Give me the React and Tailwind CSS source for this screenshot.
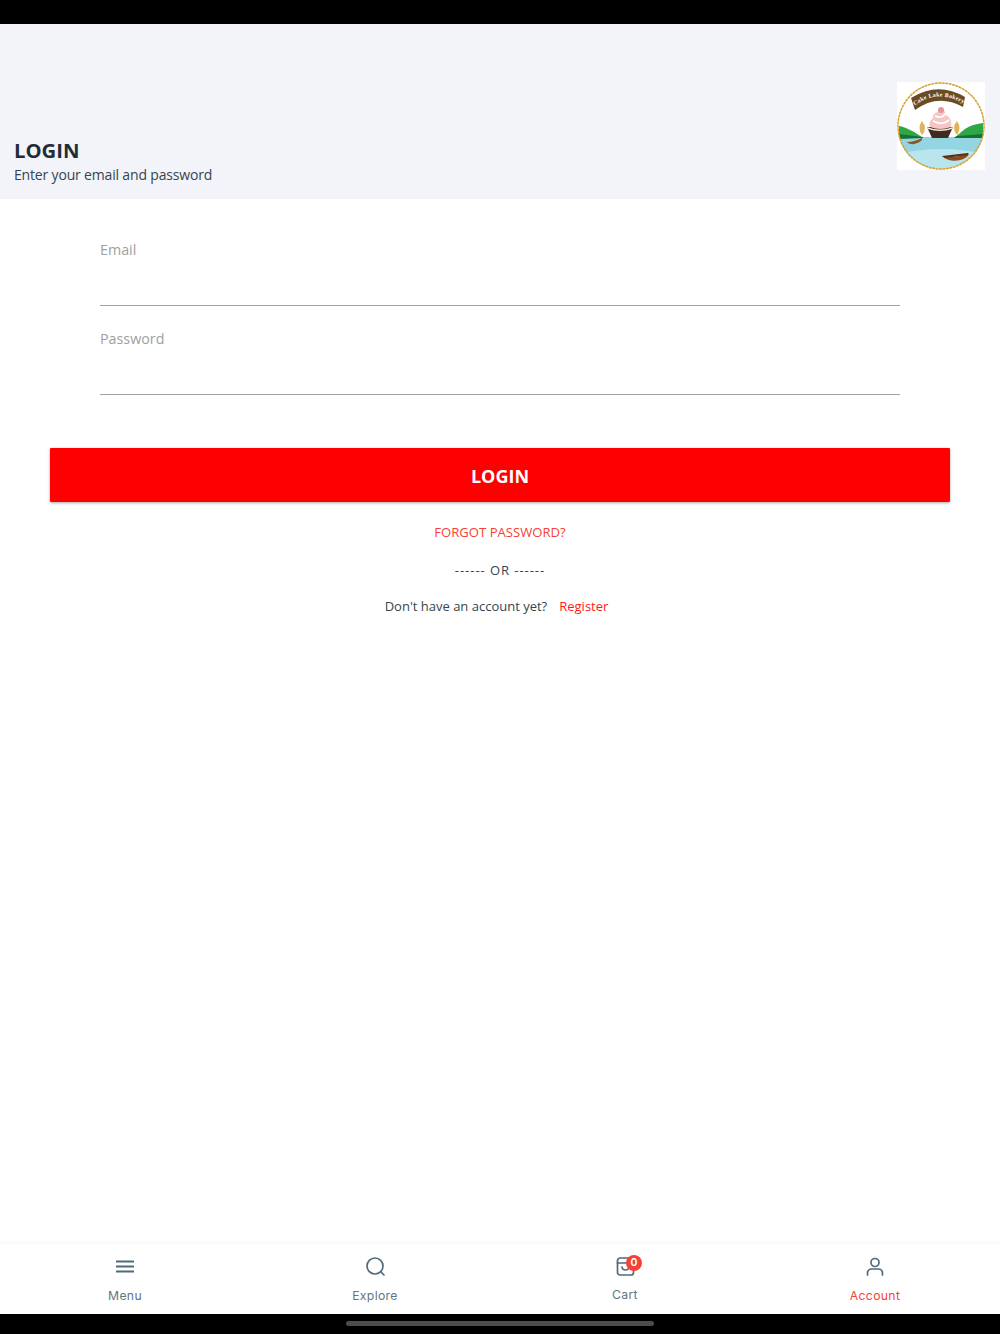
import React from "react";

function Logo() {
  return (
    <svg width="88" height="88" viewBox="0 0 88 88" className="block bg-white">
      <defs>
        <clipPath id="c"><circle cx="44" cy="44" r="43" /></clipPath>
        <path id="arc" d="M17 24 Q41 6 67 22" fill="none" />
      </defs>
      <g clipPath="url(#c)">
        <rect x="0" y="55" width="88" height="28" fill="#93d5e2" />
        <path d="M0 72 Q44 62 88 72 L88 88 L0 88Z" fill="#b9e6ee" />
        <path d="M2 44 C9 45 18 50 26 56 L2 56 Z" fill="#2fa844" />
        <path d="M2 52 L26 55 L26 56 L2 57 Z" fill="#17702f" />
        <path d="M86 41 C78 42 72 44 68 47 C64 50 61 53 57 56 L86 56 Z" fill="#2fa844" />
        <path d="M60 54 L86 52 L86 56 L57 56 Z" fill="#17702f" />
        <path d="M10 60 C15 60 21 58 25 56 L25 58 C21 62 14 64 10 60Z" fill="#8a5a2b" />
        <path d="M45 74 C54 76 63 75 71 71 L72 72 C68 80 51 81 45 74Z" fill="#8a4b1d" />
        <path d="M45 74 L71 71 L71 73 L48 76Z" fill="#5c2f10" />
      </g>
      <path d="M25 39 q-5 7 0 14 q6 -7 0 -14Z" fill="#dfb45c" />
      <path d="M60 39 q5 7 0 14 q-6 -7 0 -14Z" fill="#dfb45c" />
      <path d="M30 45 L56 45 L51 56 L35 56 Z" fill="#3f2c1e" />
      <path d="M30 45 Q43 50 56 45 L55 47 Q43 51 31 47Z" fill="#f8e9e3" />
      <path d="M33 45 C31 40 35 37 36 36 C35 32 40 30 41 30 C41 27 44 27 45 27 C48 27 48 31 48 33 C53 34 55 40 54 45 Q43 49 33 45Z" fill="#f5c6c5" />
      <path d="M36 39 Q45 44 52 38 M38 34 Q45 37 48 32" fill="none" stroke="#fff" strokeWidth="1.7" />
      <circle cx="44" cy="28" r="3" fill="#ec929a" />
      <path d="M14 16 Q41 -1 68 15 L66 25 Q41 11 18 28 Z" fill="#6a4b24" />
      <text fontSize="5.9" fontWeight="700" fill="#fff" fontFamily="'Liberation Serif', serif" letterSpacing="0.3">
        <textPath href="#arc" startOffset="50%" textAnchor="middle">Cake Lake Bakery</textPath>
      </text>
      <circle cx="44" cy="44" r="43" fill="none" stroke="#d9a02f" strokeWidth="1.500" strokeDasharray="3 0.5" />
    </svg>
  );
}

function NavItem({ label, active, children, dy }) {
  return (
    <div className="flex-1 flex flex-col items-center pt-[9px]">
      <div className="relative w-6 h-6 text-[#4f6b7a]">{children}</div>
      <span className={`mt-[9px] text-[12.2px] font-normal leading-[17px] tracking-[0.35px] ${dy ? "-translate-y-px" : ""} ${active ? "text-[#f44336]" : "text-[#5f7582]"}`}>{label}</span>
    </div>
  );
}

const stroke = { fill: "none", stroke: "currentColor", strokeWidth: 1.7, strokeLinecap: "round", strokeLinejoin: "round" };

export default function App() {
  return (
    <div className="relative w-[1000px] h-[1334px] flex flex-col bg-white overflow-hidden font-['Open_Sans','Noto_Sans',sans-serif]">
      <div className="h-6 bg-black shrink-0" />
      <header className="h-[175px] shrink-0 bg-[#f2f4f9] flex justify-between pl-[14px] pr-[15px]">
        <div className="pt-[114px]">
          <h1 className="text-[20.3px] leading-[25px] mb-[2px] font-bold text-[#1f2d36]">LOGIN</h1>
          <p className="text-[14px] leading-[20px] tracking-[-0.17px] text-[#36444d]">Enter your email and password</p>
        </div>
        <div className="pt-[58px]"><Logo /></div>
      </header>

      <main className="flex-1 flex flex-col">
        <div className="px-[100px] pt-[40px]">
          <div className="h-[67px] border-b border-[#a0a0a0] text-[14.3px] leading-[21px] text-[#a0a0a0]">Email</div>
          <div className="mt-[22px] h-[67px] border-b border-[#a0a0a0] text-[14.3px] leading-[21px] text-[#a0a0a0]">Password</div>
        </div>
        <div className="mx-[50px] mt-[53px] h-[54px] pt-[2px] bg-[#ff0000] rounded-[1px] shadow-[0_1px_3px_rgba(0,0,0,0.35)] flex items-center justify-center text-white text-[18px] font-bold">LOGIN</div>
        <div className="mt-[21px] text-center text-[13.1px] leading-[18px] text-[#f44336]">FORGOT PASSWORD?</div>
        <div className="mt-[20px] text-center text-[13px] leading-[18px] text-[#36444d] tracking-[0.95px]">------ OR ------</div>
        <div className="mt-[18px] pr-[7px] flex justify-center gap-3 text-[13px] leading-[18px] text-[#36444d]">
          <span>Don't have an account yet?</span>
          <span className="text-[#ff1a1a]">Register</span>
        </div>
      </main>

      <nav className="h-[69px] shrink-0 bg-white flex font-['Inter',sans-serif] shadow-[0_-4px_0_#fbfbfb]">
        <NavItem label="Menu">
          <svg viewBox="0 0 24 24" className="w-6 h-6"><path d="M3 7.500h18M3 12.500h18M3 17.500h18" fill="none" stroke="currentColor" strokeWidth="2" /></svg>
        </NavItem>
        <NavItem label="Explore">
          <svg viewBox="0 0 24 24" className="w-6 h-6" {...stroke}><circle cx="12" cy="12" r="8" /><path d="M18 18l3 3" /></svg>
        </NavItem>
        <NavItem label="Cart" dy>
          <svg viewBox="0 0 24 24" className="w-6 h-6" {...stroke}><rect x="4.500" y="4" width="16" height="17" rx="2.500" /><path d="M4.500 9h16M9 13c.5 4 6.500 4 7 0" /></svg>
          <span className="absolute top-px left-[13px] w-4 h-4 rounded-full bg-[#f44336] text-white text-[10.5px] font-semibold leading-4 text-center">0</span>
        </NavItem>
        <NavItem label="Account" active>
          <svg viewBox="0 0 24 24" className="w-6 h-6" {...stroke}><circle cx="12" cy="8.500" r="4" /><path d="M4.500 21v-2c0-2.500 2-4 4-4h7c2 0 4 1.500 4 4v2" /></svg>
        </NavItem>
      </nav>
      <div className="h-5 shrink-0 bg-black flex justify-center pt-[7px]">
        <div className="w-[308px] h-[5px] rounded-full bg-[#4d4d4d]" />
      </div>
    </div>
  );
}
